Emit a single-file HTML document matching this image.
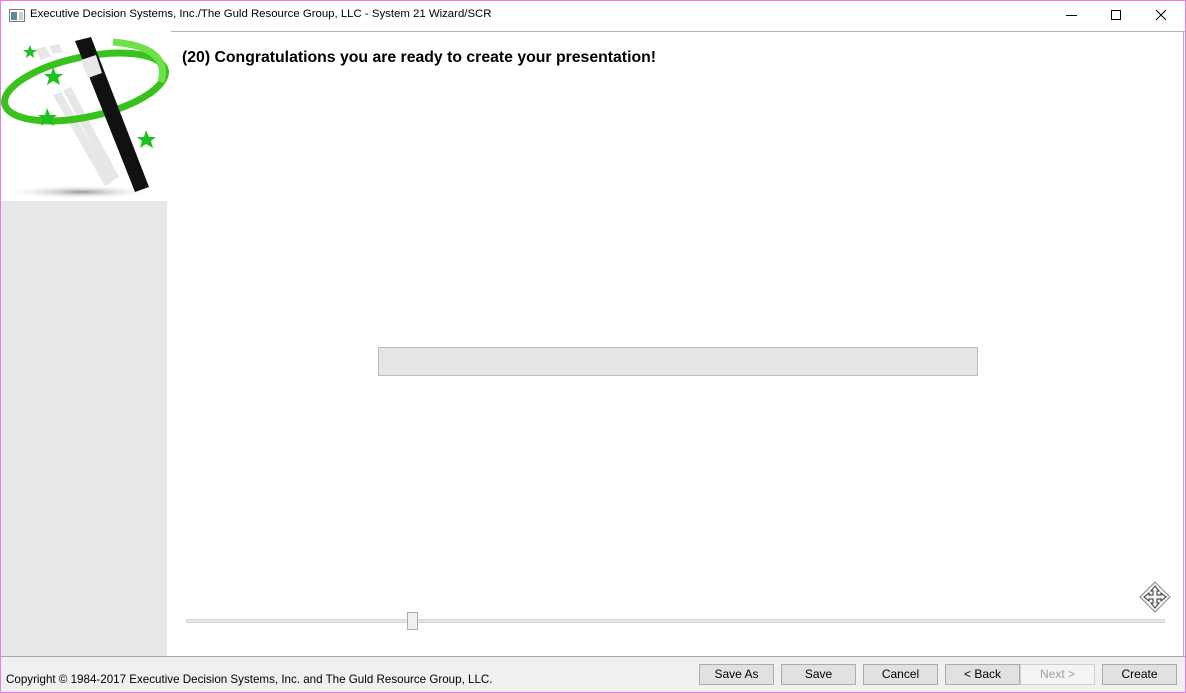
<!DOCTYPE html>
<html><head><meta charset="utf-8"><style>
*{margin:0;padding:0;box-sizing:border-box}
body{width:1186px;height:693px;position:relative;background:#fff;font-family:"Liberation Sans",Arial,sans-serif;overflow:hidden}
.frame{position:absolute;inset:0;border:1px solid #e77ee6}
.title{position:absolute;left:30px;top:8px;font-size:11.4px;color:#000}
.tline{position:absolute;left:171px;top:31px;width:1014px;height:1px;background:#b4b4b4}
.rline{position:absolute;left:1183px;top:31px;width:1px;height:625px;background:#b4b4b4}
.side{position:absolute;left:1px;top:201px;width:166px;height:455px;background:#e8e8e8}
.h{position:absolute;left:182px;top:49px;font-size:15.8px;font-weight:bold;color:#000}
.prog{position:absolute;left:378px;top:347px;width:600px;height:29px;background:#e6e6e6;border:1px solid #bcbcbc}
.track{position:absolute;left:186px;top:619px;width:979px;height:4px;background:#e7e7e7;border:1px solid #d6d6d6}
.thumb{position:absolute;left:407px;top:612px;width:11px;height:18px;background:#f0f0f0;border:1px solid #acacac}
.bot{position:absolute;left:1px;top:656px;width:1184px;height:36px;background:#f0f0f0;border-top:1px solid #a8a8a8}
.copy{position:absolute;left:6px;top:673px;font-size:11.6px;color:#000}
.btn{position:absolute;top:664px;width:75px;height:21px;background:#e1e1e1;border:1px solid #adadad;font-size:12px;text-align:center;line-height:19px;color:#000}
.dis{background:#f4f4f4;border-color:#cfcfcf;color:#a0a0a0}
</style></head><body>
<div class="frame"></div>
<svg style="position:absolute;left:9px;top:9px" width="16" height="13"><rect x="0.5" y="0.5" width="15" height="12" fill="#fff" stroke="#777"/><rect x="2" y="3" width="6" height="8" fill="#5a8a9a"/><rect x="10" y="3" width="4" height="8" fill="#ccc"/></svg>
<div class="title">Executive Decision Systems, Inc./The Guld Resource Group, LLC - System 21 Wizard/SCR</div>
<svg style="position:absolute;left:1060px;top:8px" width="120" height="16">
<line x1="6" y1="7.5" x2="17" y2="7.5" stroke="#000"/>
<rect x="51.5" y="2.5" width="9" height="9" fill="none" stroke="#000"/>
<line x1="96" y1="2" x2="106" y2="12" stroke="#000"/><line x1="106" y1="2" x2="96" y2="12" stroke="#000"/>
</svg>
<div class="tline"></div><div class="rline"></div>
<svg style="position:absolute;left:1px;top:32px" width="168" height="169">
<defs><radialGradient id="sh"><stop offset="0" stop-color="#999"/><stop offset="1" stop-color="#fff" stop-opacity="0"/></radialGradient></defs>
<ellipse cx="80" cy="160" rx="75" ry="7" fill="url(#sh)"/>
<g opacity="0.35" fill="#bbb"><polygon points="52,63 60,60 112,150 104,154"/><polygon points="62,58 70,55 118,145 110,150"/><polygon points="34,18 44,14 50,24 40,28"/><polygon points="48,14 58,12 62,20 52,22"/></g>
<ellipse cx="84" cy="55" rx="82" ry="30" transform="rotate(-12 84 55)" fill="none" stroke="#39c21c" stroke-width="7"/>
<polygon points="74,9 90,5 148,155 134,160" fill="#111"/>
<polygon points="80,28 95,23 101,41 87,46" fill="#e8e8e8"/>
<path d="M112,10 Q170,15 160,50" fill="none" stroke="#6ee04a" stroke-width="7"/>
<g fill="#1ec21e">
<polygon points="29,13 31,18 36,18 32,21 33,26 29,23 25,26 26,21 22,18 27,18"/>
<polygon points="52,35 55,42 62,42 57,46 59,53 52,49 46,53 48,46 43,42 50,42"/>
<polygon points="46,76 49,83 56,83 51,87 53,94 46,90 40,94 42,87 37,83 44,83"/>
<polygon points="145,98 148,105 155,105 150,109 152,116 145,112 139,116 141,109 136,105 143,105"/>
</g></svg>
<div class="side"></div>
<div class="h">(20) Congratulations you are ready to create your presentation!</div>
<div class="prog"></div>
<svg style="position:absolute;left:1139px;top:581px" width="32" height="32">
<polygon points="16,1 31,16 16,31 1,16" fill="#f4f4f4" stroke="#888"/>
<g fill="none" stroke="#333" stroke-width="1"><path d="M16,5 L12,10 H14 V14 H10 V12 L5,16 L10,20 V18 H14 V22 H12 L16,27 L20,22 H18 V18 H22 V20 L27,16 L22,12 V14 H18 V10 H20 Z"/></g></svg>
<div class="track"></div><div class="thumb"></div>
<div class="bot"></div>
<div class="copy">Copyright © 1984-2017 Executive Decision Systems, Inc. and The Guld Resource Group, LLC.</div>
<div class="btn" style="left:699px">Save As</div>
<div class="btn" style="left:781px">Save</div>
<div class="btn" style="left:863px">Cancel</div>
<div class="btn" style="left:945px">&lt; Back</div>
<div class="btn dis" style="left:1020px">Next &gt;</div>
<div class="btn" style="left:1102px">Create</div>
</body></html>
